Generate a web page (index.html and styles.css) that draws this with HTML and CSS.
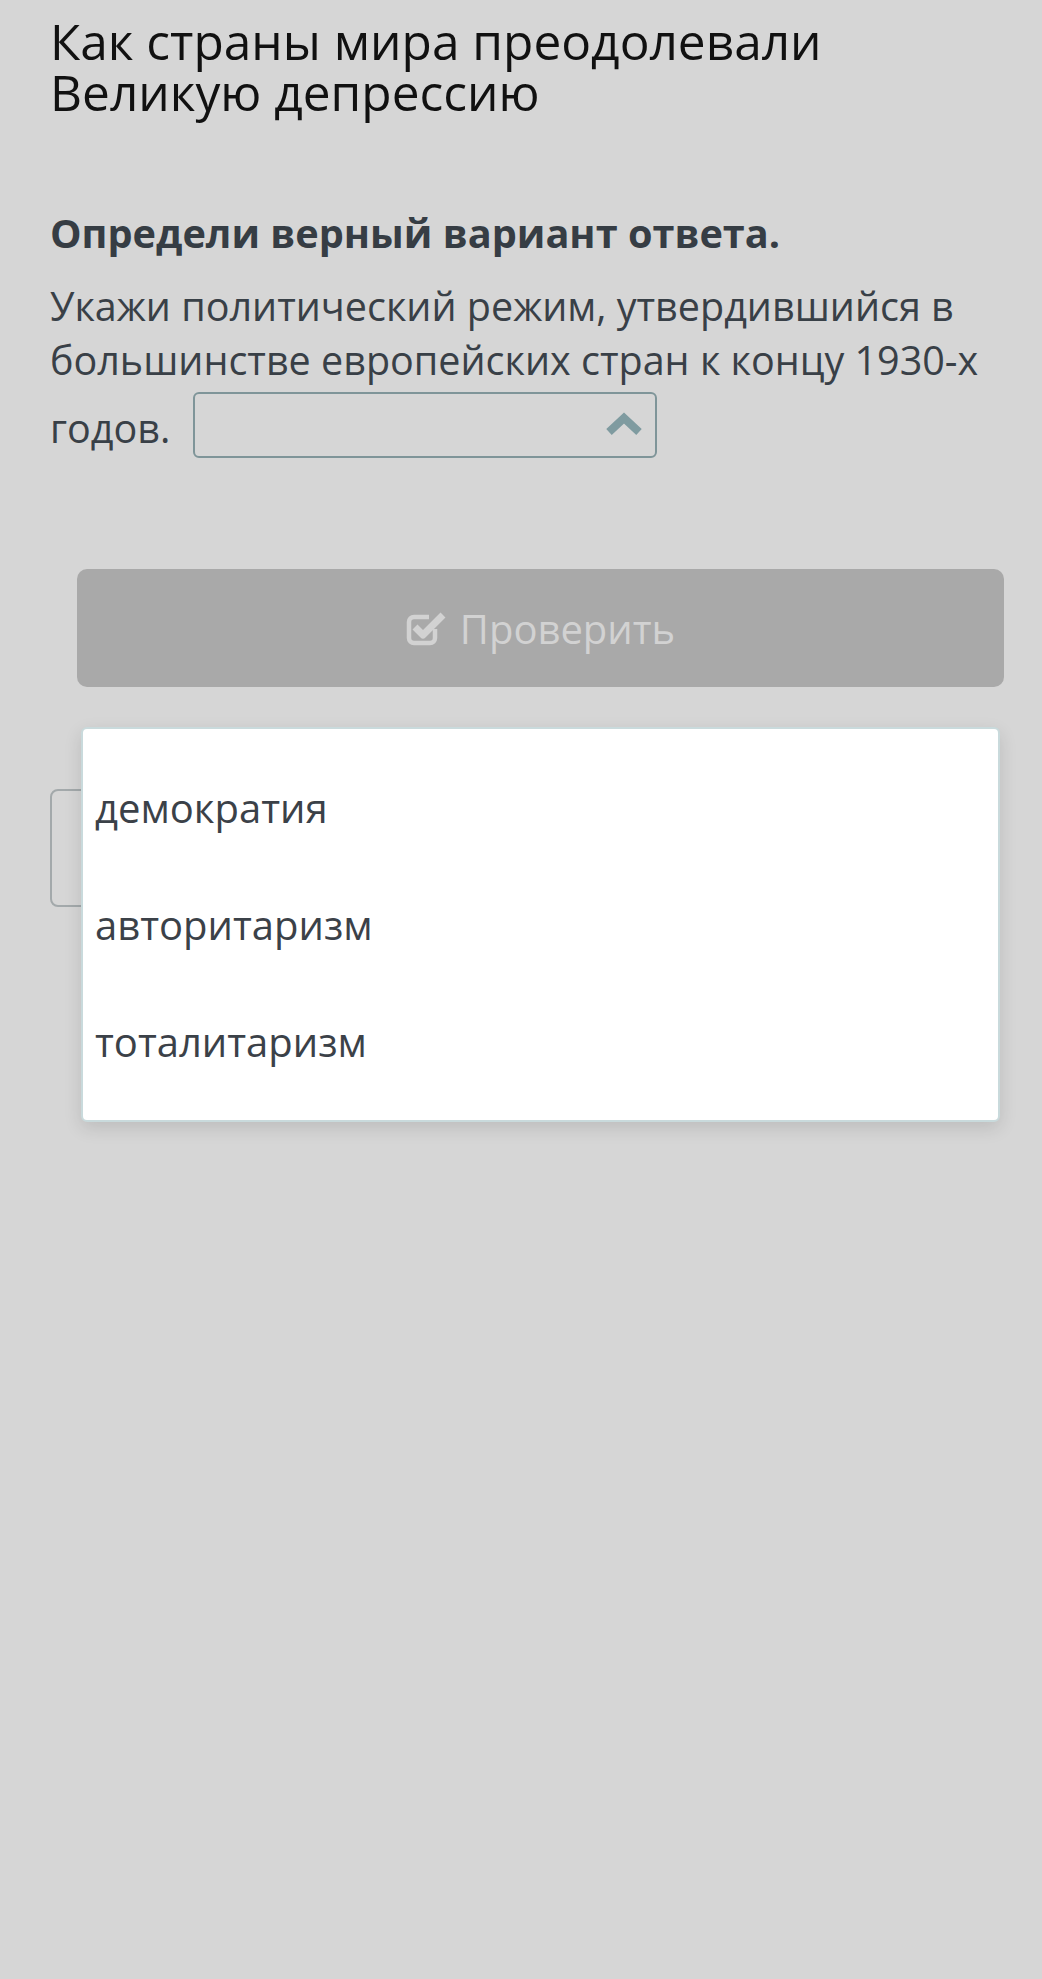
FILE: index.html
```html
<!DOCTYPE html>
<html>
<head lang="ru">
    <meta charset="UTF-8">
    <title>Как страны мира преодолевали Великую депрессию</title>
    <link rel="stylesheet" href="styles.css">
</head>
<body>
<div id="page">
    <h1 class="title">Как страны мира преодолевали<br>Великую депрессию</h1>
    <div class="task">
        <p class="hint">Определи верный вариант ответа.</p>
        <p class="question">Укажи политический режим, утвердившийся в большинстве европейских стран к концу 1930-х годов. <span class="select"><svg class="chevron" width="38" height="24" viewBox="0 0 38 24"><polyline points="4,20 19,6 34,20" fill="none" stroke="#7f9ba0" stroke-width="8"/></svg></span></p>
    </div>
    <div class="actions">
        <button class="check">
            <svg class="check-icon" width="42" height="38" viewBox="0 0 42 38">
                <path d="M29 20v9a5 5 0 0 1-5 5H8a5 5 0 0 1-5-5V13a5 5 0 0 1 5-5h15" fill="none" stroke="#d2d2d2" stroke-width="4.5"/>
                <polyline points="9,18 17,26 37,6" fill="none" stroke="#d2d2d2" stroke-width="7" stroke-linejoin="round"/>
            </svg>
            <span>Проверить</span>
        </button>
        <div class="next"></div>
    </div>
    <!-- открытый список вариантов -->
    <ul class="dropdown">
        <li>демократия</li>
        <li>авторитаризм</li>
        <li>тоталитаризм</li>
    </ul>
</div>
</body>
</html>
```
FILE: styles.css
```css
*{
    margin:0;
    padding:0;
    list-style-type: none;
    box-sizing: border-box;
}
body{
    background:#d6d6d6;
    font-family:"Open Sans", "Noto Sans", sans-serif;
    color:#394047;
}
#page{
    position:relative;
    width:1042px;
    min-height:1979px;
    padding:16px 38px 0 50px;
}
.title{
    font-weight:normal;
    font-size:49.6px;
    line-height:51px;
    color:#111;
}
.task{
    margin-top:90px;
}
.hint{
    font-weight:bold;
    font-size:39.7px;
    line-height:50px;
    color:#363d44;
}
.question{
    margin-top:21px;
    font-size:39.5px;
    line-height:54px;
}
.select{
    display:inline-block;
    vertical-align:-15px;
    width:464px;
    height:66px;
    margin:5px 0 0 12px;
    padding:18px 12px 0 0;
    border:2px solid #7f9599;
    border-radius:6px;
}
.chevron{
    display:block;
    margin-left:auto;
}
.actions{
    margin-top:111px;
    padding-left:27px;
}
.check{
    display:flex;
    align-items:center;
    justify-content:center;
    gap:12px;
    width:927px;
    height:118px;
    border:none;
    border-radius:10px;
    background:#a9a9a9;
    color:#d2d2d2;
    font-family:inherit;
    font-size:40px;
}
.next{
    margin:102px 0 0 -27px;
    width:940px;
    height:118px;
    border:2px solid #a3a9ab;
    border-radius:8px;
}
.dropdown{
    position:absolute;
    left:81px;
    top:727px;
    width:919px;
    height:395px;
    padding-top:20px;
    background:#fff;
    border:2px solid #c9dadc;
    border-radius:6px;
    box-shadow:0 6px 18px rgba(0,0,0,0.12);
}
.dropdown li{
    height:117px;
    padding-left:12px;
    display:flex;
    align-items:center;
    font-size:40px;
    color:#3b4148;
}
```
